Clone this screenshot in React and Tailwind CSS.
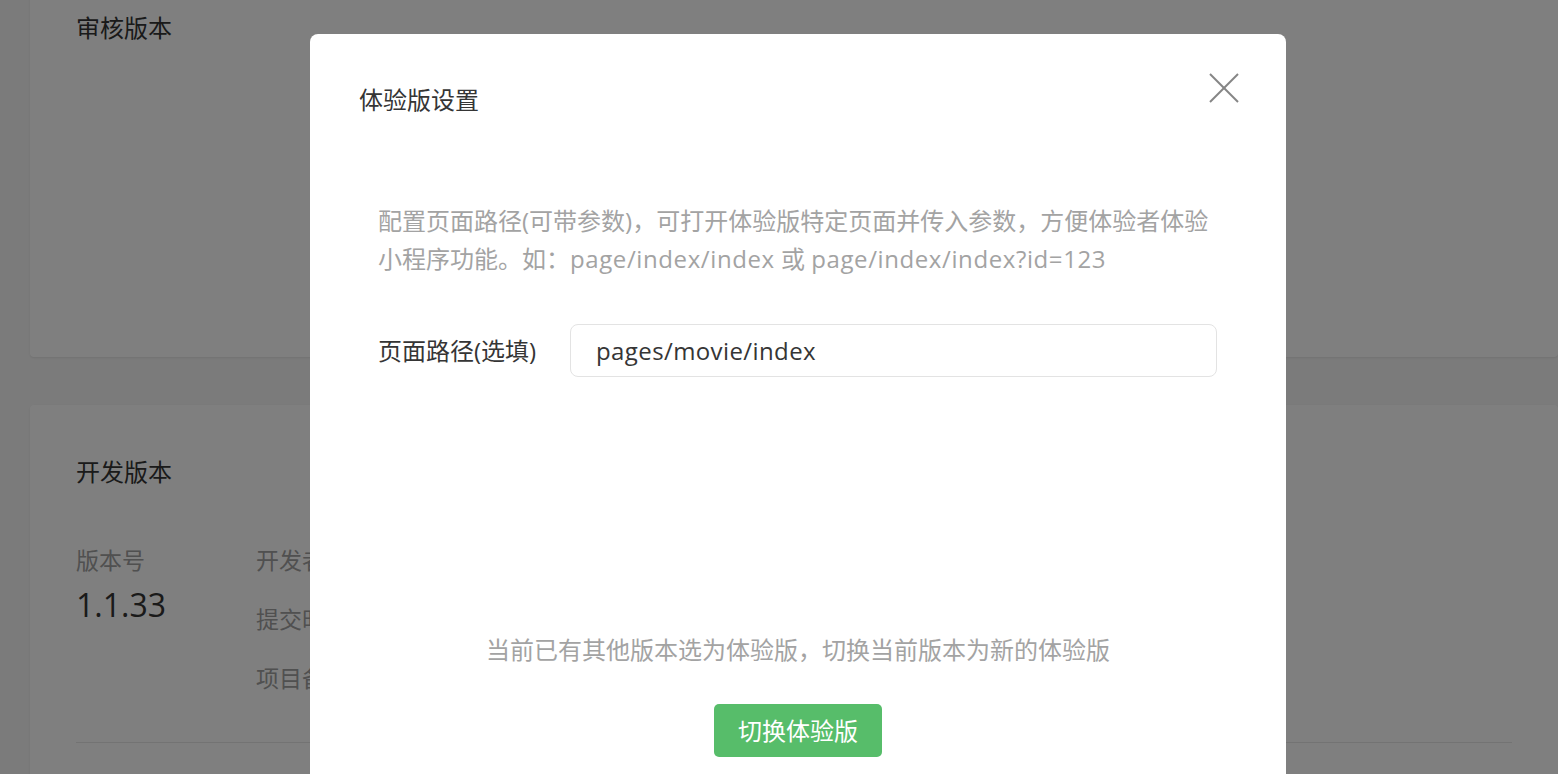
import React from "react";

const font = { fontFamily: '"Open Sans", "Noto Sans CJK SC", sans-serif' };

const Card = ({ className, children }) => (
  <div className={`bg-white rounded-[4px] shadow-[0_1px_2px_rgba(0,0,0,0.08)] ${className}`}>{children}</div>
);

export default function App() {
  return (
    <div className="relative h-[774px] w-full overflow-hidden bg-[#f6f6f6]" style={font}>
      {/* page behind the dialog */}
      <div className="pl-[30px] flex flex-col gap-[48px] -mt-[40px]">
        <Card className="h-[397px] pl-[46px] pt-[52px]">
          <h3 className="text-[24px] leading-[32px] text-[#353535]">审核版本</h3>
        </Card>
        <Card className="h-[420px] pl-[46px] pt-[51px]">
          <h3 className="text-[24px] leading-[32px] text-[#353535]">开发版本</h3>
          <div className="flex mt-[56px]">
            <div className="w-[180px]">
              <div className="text-[23px] leading-[32px] text-[#a0a0a0]">版本号</div>
              <div className="text-[32px] leading-[40px] text-[#353535] mt-[9px]">1.1.33</div>
            </div>
            <div className="flex flex-col gap-[27px] text-[23px] leading-[32px] text-[#a0a0a0]">
              <div>开发者</div>
              <div>提交时间</div>
              <div>项目备注</div>
            </div>
          </div>
          <div className="mt-[48px] mr-[46px] border-t border-[#e7e7e7]" />
        </Card>
      </div>

      {/* mask */}
      <div className="absolute inset-0 bg-black/50" />

      {/* dialog */}
      <div className="absolute left-[310px] top-[34px] w-[976px] h-[800px] bg-white rounded-[8px]">
        <button className="absolute right-[46px] top-[38px] w-[32px] h-[32px] flex items-center justify-center">
          <svg width="30" height="30" viewBox="0 0 30 30" fill="none" stroke="#858585" strokeWidth="2">
            <line x1="1" y1="1" x2="29" y2="29" />
            <line x1="29" y1="1" x2="1" y2="29" />
          </svg>
        </button>
        <div className="pt-[50px] pl-[49px] text-[24px] leading-[32px] text-[#353535]">体验版设置</div>
        <div className="mt-[86px] pl-[68px] pr-[40px]">
          <p className="text-[24px] leading-[38px] text-[#a3a3a3]">
            配置页面路径(可带参数)，可打开体验版特定页面并传入参数，方便体验者体验
            <br />
            小程序功能。如：<span className="tracking-[0.6px]">page/index/index</span> 或{" "}
            <span className="tracking-[0.6px]">page/index/index?id=123</span>
          </p>
          <div className="mt-[46px] flex items-center">
            <label className="w-[192px] text-[24px] leading-[32px] text-[#353535]">页面路径(选填)</label>
            <div className="w-[647px] h-[53px] border border-[#e3e3e3] rounded-[8px] flex items-center pl-[25px] text-[24px] tracking-[0.4px] text-[#353535]">
              pages/movie/index
            </div>
          </div>
        </div>
        <div className="mt-[257px] text-center text-[24px] leading-[32px] text-[#a3a3a3]">
          当前已有其他版本选为体验版，切换当前版本为新的体验版
        </div>
        <div className="mt-[38px] flex justify-center">
          <button className="w-[168px] h-[53px] rounded-[5px] bg-[#57bd6a] text-white text-[24px]">切换体验版</button>
        </div>
      </div>
    </div>
  );
}
